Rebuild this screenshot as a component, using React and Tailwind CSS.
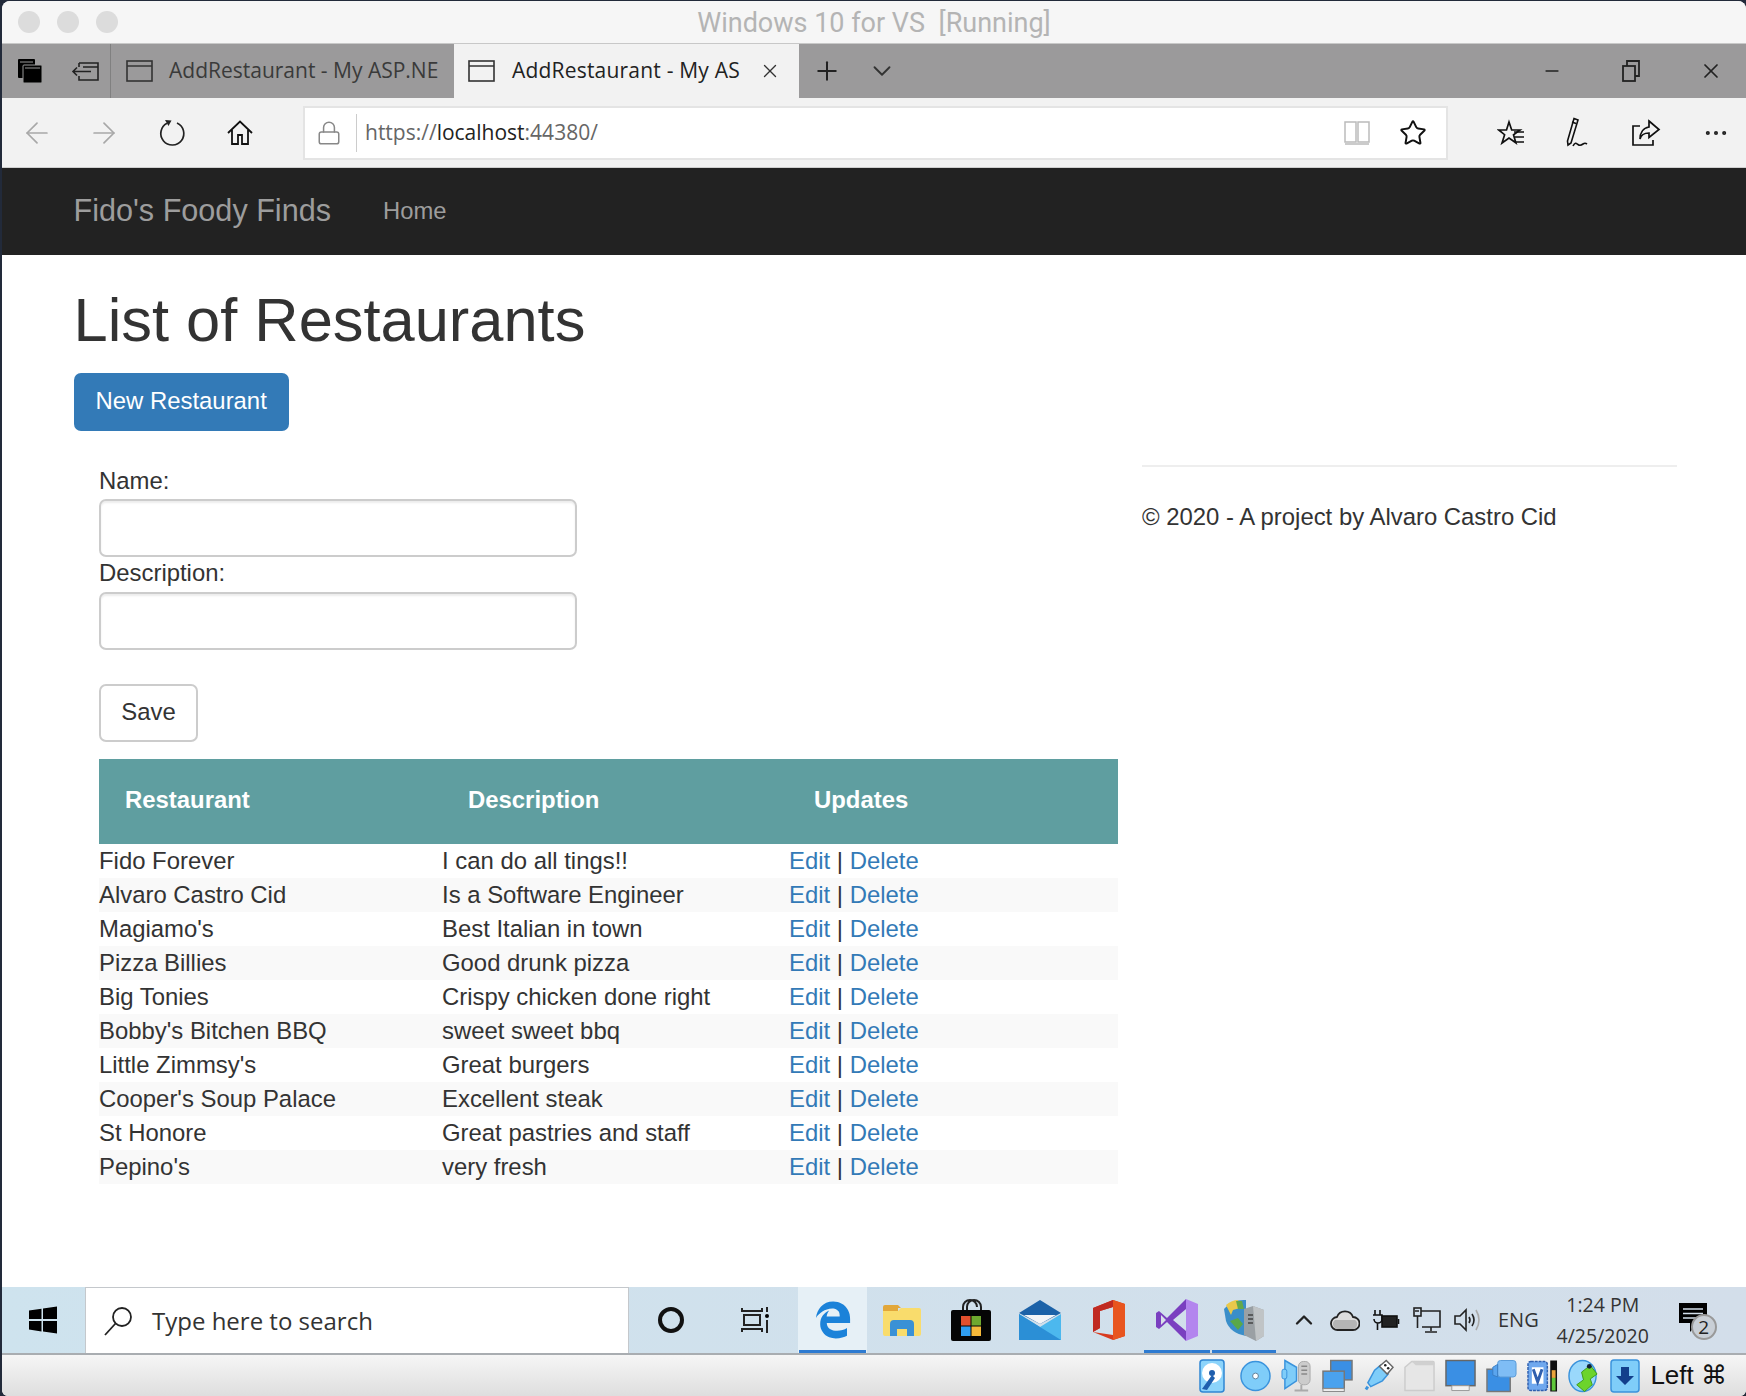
import { ArrowLeft, ArrowRight, Plus, ChevronDown, ChevronUp, Minus, X, Star, Lock, MoreHorizontal } from "lucide-react";
import { FaEdgeLegacy } from "react-icons/fa6";

const restaurants = [
  ["Fido Forever", "I can do all tings!!"],
  ["Alvaro Castro Cid", "Is a Software Engineer"],
  ["Magiamo's", "Best Italian in town"],
  ["Pizza Billies", "Good drunk pizza"],
  ["Big Tonies", "Crispy chicken done right"],
  ["Bobby's Bitchen BBQ", "sweet sweet bbq"],
  ["Little Zimmsy's", "Great burgers"],
  ["Cooper's Soup Palace", "Excellent steak"],
  ["St Honore", "Great pastries and staff"],
  ["Pepino's", "very fresh"],
];

function TabIcon() {
  return (
    <svg width="28" height="24" viewBox="0 0 28 24" fill="none" stroke="#333" strokeWidth="1.6" className="shrink-0">
      <rect x="1" y="2" width="25" height="20" />
      <path d="M1 7h25" />
    </svg>
  );
}

function TabsIcon() {
  return (
    <svg width="26" height="26" viewBox="0 0 26 26">
      <rect x="1" y="1" width="17" height="19" rx="1" fill="#000" />
      <path d="M3 4h13" stroke="#999" strokeWidth="1" />
      <rect x="6" y="7" width="19" height="18" rx="1" fill="#000" stroke="#999" strokeWidth="1" />
      <path d="M8 10h15" stroke="#999" strokeWidth="1" />
    </svg>
  );
}

function SetAsideIcon() {
  return (
    <svg width="28" height="20" viewBox="0 0 28 20" fill="none" stroke="#222" strokeWidth="1.6">
      <path d="M8 2h19v17H8v-4M8 6v-4M12 6h15" />
      <path d="M20 10.500H2M6 6.500l-4 4 4 4" />
    </svg>
  );
}

function ReloadIcon() {
  return (
    <svg width="28" height="28" viewBox="0 0 28 28" fill="none" stroke="#222" strokeWidth="1.7">
      <path d="M18 4a11.500 11.500 0 1 1-10 .3" />
      <path d="M6 1l6.500 .5-3 5.500z" fill="#222" strokeWidth="0" />
    </svg>
  );
}

function HomeIcon() {
  return (
    <svg width="28" height="28" viewBox="0 0 28 28" fill="none" stroke="#111" strokeWidth="1.8">
      <path d="M2 14 14 2.500 26 14M6 11v14h6v-9h4v9h6V11" />
    </svg>
  );
}

function BookIcon() {
  return (
    <svg width="26" height="24" viewBox="0 0 26 24" fill="none" stroke="#bbb" strokeWidth="1.5">
      <path d="M1 1h11v20H1zM14 1h11v20H14zM1 23h24" />
    </svg>
  );
}

function FavListIcon() {
  return (
    <svg width="28" height="28" viewBox="0 0 28 28" fill="none" stroke="#111" strokeWidth="1.7">
      <path d="M11 2l2.700 8H22l-6.500 4.800 2.400 8L11 18l-7 5 2.600-8.300L0.800 10H8.500z" transform="translate(1 1)" />
      <path d="M17 13h10M18 18h9M18 23h9" />
    </svg>
  );
}

function PenIcon() {
  return (
    <svg width="28" height="32" viewBox="0 0 28 32" fill="none" stroke="#111" strokeWidth="1.6">
      <path d="M10 1.500 14 3 7 26l-3 2-.5-4z" />
      <path d="M8 5l4 1.500" />
      <path d="M9 29c2-4 3-3 5-1.500s3 1 5-.5 4 0 4 0" />
    </svg>
  );
}

function ShareIcon() {
  return (
    <svg width="30" height="28" viewBox="0 0 30 28" fill="none" stroke="#111" strokeWidth="1.7">
      <path d="M9 7H2v19h20v-5" />
      <path d="M18 2l10 8.500-10 8V14c-5 0-8 2-9 6 0-6 3-11 9-12z" />
    </svg>
  );
}

function RestoreIcon() {
  return (
    <svg width="18" height="22" viewBox="0 0 18 22" fill="none" stroke="#222" strokeWidth="1.8">
      <rect x="1" y="6" width="12" height="15" />
      <path d="M5 6V1h12v15h-4" />
    </svg>
  );
}

function WindowsLogo() {
  return (
    <svg width="28" height="28" viewBox="0 0 28 28" fill="#000">
      <path d="M0 4.500 12.500 2.800V13H0zM14 2.500 28 .5V13H14zM0 15h12.500v10.400L0 23.500zM14 15h14v12.500l-14-2z" />
    </svg>
  );
}

function SearchGlassIcon() {
  return (
    <svg width="32" height="32" viewBox="0 0 32 32" fill="none" stroke="#222" strokeWidth="1.8">
      <circle cx="20" cy="12" r="9" />
      <path d="M13.500 18.500 3 30" />
    </svg>
  );
}

function TaskViewIcon() {
  return (
    <svg width="30" height="28" viewBox="0 0 30 28" fill="none" stroke="#222" strokeWidth="2">
      <path d="M1 2v3h20V2M3 9h16v10H3zM1 26v-3h20v3M26 1v5M26 14v13" />
      <circle cx="26" cy="10" r="2" fill="#000" stroke="none" />
    </svg>
  );
}

function FolderIcon() {
  return (
    <svg width="38" height="32" viewBox="0 0 38 32">
      <path d="M0 3q0-2 2-2h13l3 3h-3v3H0z" fill="#e2a73a" />
      <path d="M0 7h15l3-3h18q2 0 2 2v24q0 2-2 2H2q-2 0-2-2z" fill="#f9dc6c" />
      <path d="M7 32V20q0-4 4-4h16q4 0 4 4v12h-7v-7H14v7z" fill="#3a91d6" />
    </svg>
  );
}

function StoreIcon() {
  return (
    <svg width="40" height="42" viewBox="0 0 40 42">
      <path d="M12 14V8a7 7 0 0 1 14 0M16 14V8a7 7 0 0 1 14 0v6" fill="none" stroke="#222" strokeWidth="2" />
      <rect x="0" y="11" width="40" height="31" rx="2" fill="#050505" />
      <rect x="10" y="17" width="9.500" height="9.500" fill="#e2502d" />
      <rect x="20.500" y="17" width="9.500" height="9.500" fill="#6ea82f" />
      <rect x="10" y="27.500" width="9.500" height="9.500" fill="#2f9df0" />
      <rect x="20.500" y="27.500" width="9.500" height="9.500" fill="#f5b93a" />
    </svg>
  );
}

function MailIcon() {
  return (
    <svg width="42" height="40" viewBox="0 0 42 40">
      <path d="M0 13 21 0l21 13L21 24z" fill="#1c62a8" />
      <path d="M5 15h32L21 24z" fill="#f4f6f8" />
      <path d="M0 14 21 27 42 14v26H0z" fill="#4cb8ee" />
      <path d="M0 14 21 27 42 40H0z" fill="#2b8fd6" />
    </svg>
  );
}

function OfficeIcon() {
  return (
    <svg width="32" height="40" viewBox="0 0 32 40">
      <path d="M0 8 20 0l12 4v32l-12 4L0 32l20 3V7L7 11v17l-7 4z" fill="#d83b1f" />
      <path d="M20 0l12 4v32l-12 4 0-5V7z" fill="#e8551f" />
      <path d="M0 8 20 0v7L7 11v17l-7 4z" fill="#c02a22" />
    </svg>
  );
}

function VsIcon() {
  return (
    <svg width="42" height="42" viewBox="0 0 42 42">
      <path d="M30 0l12 5v32l-12 5z" fill="#b385ee" />
      <path d="M30 0 11 19 3 12l-3 2v14l3 2 8-7 19 19 0-10L17 21 30 10z" fill="#7a3fc0" />
      <path d="M5 16l5 5-5 5z" fill="#d7dfe9" />
    </svg>
  );
}

function VBoxManagerIcon() {
  return (
    <svg width="40" height="42" viewBox="0 0 40 42">
      <path d="M0 10q8-10 22-9v36Q6 34 2 22z" fill="#3a8ec9" />
      <path d="M2 6q6-5 12-5l2 8-7 2-2 5z" fill="#e9c84a" />
      <path d="M6 22l8-3 5 6-5 6z" fill="#5aa848" />
      <path d="M12 2l6 0 2 8-6 0z" fill="#64a84a" />
      <path d="M20 10l9-3 11 4v26l-8 5-12-6z" fill="#9aa0a4" />
      <path d="M29 7l11 4v26l-8 5z" fill="#c0c4c6" />
      <path d="M24 16h5M24 20h5M24 24h5" stroke="#444" strokeWidth="1.500" />
    </svg>
  );
}

function CloudIcon() {
  return (
    <svg width="30" height="24" viewBox="0 0 30 24">
      <path d="M8 22a6.500 6.500 0 0 1-1-13 8.500 8.500 0 0 1 16 0 6.500 6.500 0 0 1 0 13z" fill="#ddd" stroke="#222" strokeWidth="1.8" />
      <path d="M5 12h20a5 5 0 0 1-2 9H8a5 5 0 0 1-3-9z" fill="#b5b5b5" />
    </svg>
  );
}

function BatteryIcon() {
  return (
    <svg width="28" height="22" viewBox="0 0 28 22" fill="none" stroke="#111" strokeWidth="1.6">
      <path d="M3 1v5M8 1v5M1 6h9v4a4 4 0 0 1-8 0M5.500 14v7" />
      <rect x="10" y="7" width="15" height="11" fill="#222" />
      <path d="M26.500 10v5" />
    </svg>
  );
}

function NetworkIcon() {
  return (
    <svg width="28" height="26" viewBox="0 0 28 26" fill="none" stroke="#222" strokeWidth="1.6">
      <path d="M7 4h20v16H9M18 20v4M12 25h12" />
      <rect x="1" y="1" width="7" height="8" fill="#d2deea" />
      <path d="M4.500 9v12M2 4h4" />
    </svg>
  );
}

function VolumeIcon() {
  return (
    <svg width="28" height="26" viewBox="0 0 28 26" fill="none" stroke="#222" strokeWidth="1.6">
      <path d="M2 9h5l6-6v20l-6-6H2z" />
      <path d="M16 10q2 3 0 6M19 7q4 6 0 12" />
      <path d="M23 3q6 10 0 20" stroke="#aaa" />
    </svg>
  );
}

function NotificationIcon() {
  return (
    <div className="relative w-[34px] h-[34px]">
      <svg width="28" height="30" viewBox="0 0 28 30">
        <path d="M0 0h28v20h-9l-8 9v-9H0z" fill="#000" />
        <path d="M4 6h20M4 10.500h20M4 15h14" stroke="#d2deea" strokeWidth="1.500" />
      </svg>
      <div className="absolute left-[12px] top-[11px] w-[26px] h-[26px] rounded-full bg-[#c9cfd6] border-2 border-[#999] text-[19px] leading-[22px] text-center text-[#222] font-['Open_Sans',sans-serif]">
        2
      </div>
    </div>
  );
}

function HdIcon() {
  return (
    <svg width="26" height="34" viewBox="0 0 26 34">
      <rect x="1" y="1" width="24" height="32" rx="3" fill="#8cd4fb" stroke="#2f86d3" strokeWidth="1.500" />
      <circle cx="13" cy="14" r="10" fill="#fff" />
      <circle cx="13" cy="14" r="3" fill="#1f5fae" />
      <path d="M3 30 13 16l3 3L8 31z" fill="#1f5fae" />
    </svg>
  );
}

function CdIcon() {
  return (
    <svg width="32" height="32" viewBox="0 0 32 32">
      <circle cx="16" cy="16" r="15" fill="#7fcdf9" stroke="#3a93dc" strokeWidth="1.500" />
      <circle cx="16" cy="16" r="3" fill="#fff" stroke="#5a7e9a" strokeWidth="1" />
    </svg>
  );
}

function AudioIcon() {
  return (
    <svg width="32" height="34" viewBox="0 0 32 34">
      <rect x="18" y="2" width="12" height="24" rx="5" fill="#ccc" stroke="#aaa" />
      <path d="M21 7h6M21 11h6M21 15h6" stroke="#888" strokeWidth="1.500" />
      <path d="M14 32h14M21 26v6" stroke="#aaa" strokeWidth="2" />
      <path d="M4 1l12 7v14L4 30z" fill="#7fcdf9" stroke="#3a93dc" strokeWidth="1.500" />
      <rect x="1" y="10" width="5" height="10" rx="2" fill="#7fcdf9" stroke="#3a93dc" />
    </svg>
  );
}

function NetIcon() {
  return (
    <svg width="32" height="34" viewBox="0 0 32 34">
      <rect x="9" y="1" width="22" height="20" fill="#3a8fe4" stroke="#777" strokeWidth="1.500" />
      <rect x="1" y="12" width="22" height="18" fill="#4aa2ee" stroke="#777" strokeWidth="1.500" />
      <rect x="1" y="30" width="22" height="3" fill="#eee" stroke="#888" strokeWidth="1" />
    </svg>
  );
}

function UsbIcon() {
  return (
    <svg width="32" height="34" viewBox="0 0 32 34">
      <path d="M18 6 12 11 5 24l3 4 12-6 6-7z" fill="#7fcdf9" stroke="#3a93dc" strokeWidth="1.500" />
      <path d="M5 28l-2 3" stroke="#3a93dc" strokeWidth="3" />
      <path d="M17 7l7-6 7 7-6 7z" fill="#fff" stroke="#666" strokeWidth="1.500" />
      <circle cx="23" cy="6" r="1.300" fill="#222" />
      <circle cx="26" cy="9" r="1.300" fill="#222" />
    </svg>
  );
}

function SharedFolderIcon() {
  return (
    <svg width="32" height="32" viewBox="0 0 32 32">
      <path d="M1 7l7-6h22q1 0 1 1v29H1z" fill="#e6e6e6" stroke="#ccc" strokeWidth="1.500" />
      <path d="M8 1h22q1 0 1 1v3H12z" fill="#d0d0d0" />
    </svg>
  );
}

function DisplayIcon() {
  return (
    <svg width="32" height="34" viewBox="0 0 32 34">
      <rect x="1" y="1" width="30" height="26" fill="#3a8fe4" stroke="#666" strokeWidth="1.500" />
      <path d="M7 27h18v5H7z" fill="#f2f2f2" stroke="#999" />
    </svg>
  );
}

function CaptureIcon() {
  return (
    <svg width="32" height="34" viewBox="0 0 32 34">
      <rect x="1" y="10" width="24" height="23" fill="#3a8fe4" stroke="#777" strokeWidth="1.500" />
      <rect x="12" y="1" width="19" height="17" rx="3" fill="#7fbdf5" stroke="#5a9bd8" />
      <path d="M12 5l-5 3v8l5 2z" fill="#5aa5ee" stroke="#3a7ec4" />
    </svg>
  );
}

function VIcon() {
  return (
    <svg width="32" height="34" viewBox="0 0 32 34">
      <rect x="1" y="2" width="20" height="30" rx="3" fill="#6fa8ee" stroke="#2f5fae" strokeWidth="1.500" strokeDasharray="3 1" />
      <rect x="5" y="8" width="12" height="17" fill="#fff" />
      <path d="M6.500 10 11 23 15.500 10" fill="none" stroke="#2f5fae" strokeWidth="3" />
      <rect x="24" y="1" width="7" height="32" fill="#111" />
      <rect x="25.500" y="11" width="4" height="8" fill="#e8a33a" />
      <rect x="25.500" y="19" width="4" height="13" fill="#5fc83a" />
    </svg>
  );
}

function MouseIcon() {
  return (
    <svg width="32" height="34" viewBox="0 0 32 34">
      <ellipse cx="15" cy="17" rx="14" ry="16" fill="#9ad8fb" stroke="#3a93dc" strokeWidth="1.500" />
      <path d="M14 13 23 6l7 9-7 5 2 6-8 7-8-7 7-5z" fill="#6cd42c" stroke="#3f9a1a" />
      <circle cx="22" cy="7" r="2.500" fill="#123" />
    </svg>
  );
}

function DownIcon() {
  return (
    <svg width="30" height="34" viewBox="0 0 30 34">
      <rect x="1" y="1" width="28" height="32" rx="3" fill="#7fcdf9" stroke="#3a93dc" strokeWidth="1.500" />
      <path d="M11 8h8v9h5l-9 9-9-9h5z" fill="#123f8c" />
    </svg>
  );
}

function Tile({ children, active, underline, className = "w-[69px]" }) {
  return (
    <div className={`relative flex h-full items-center justify-center ${className} ${active ? "bg-[#e6f0f6]" : ""}`}>
      {children}
      {underline && <div className="absolute bottom-0 left-[1px] right-[1px] h-[3px] bg-[#2e7bd1]" />}
    </div>
  );
}

function StatusSlot({ children }) {
  return <div className="flex w-[31px] shrink-0 justify-center">{children}</div>;
}

export default function App() {
  const chrome = "font-['Open_Sans','Noto_Sans',sans-serif]";
  const bsFont = "font-['Liberation_Sans',Arial,sans-serif]";

  return (
    <div className="h-[1396px] w-[1746px] overflow-hidden bg-[#222a3a] pl-[2px] pt-[1px]">
      <div className="flex h-full flex-col overflow-hidden rounded-t-[8px] rounded-b-[6px] bg-white">
        {/* mac title bar */}
        <div className="relative flex h-[43px] shrink-0 items-center justify-center border-b border-[#c8c8c8] bg-[#f6f6f6] pt-[2px]">
          <div className="absolute left-[16px] top-[10px] flex gap-[17px]">
            <div className="h-[22px] w-[22px] rounded-full bg-[#dcdcdc]" />
            <div className="h-[22px] w-[22px] rounded-full bg-[#dcdcdc]" />
            <div className="h-[22px] w-[22px] rounded-full bg-[#dcdcdc]" />
          </div>
          <span className="whitespace-pre font-['Roboto',sans-serif] text-[27px] text-[#b4b4b4]">Windows 10 for VS  [Running]</span>
        </div>

        {/* edge tabs */}
        <div className={`flex h-[54px] shrink-0 items-center bg-[#9b9a9b] ${chrome} text-[21px] text-[#3a3a3a]`}>
          <div className="flex h-full w-[109px] items-center border-r border-[#808080] pl-[15px]">
            <TabsIcon />
            <div className="ml-[28px]"><SetAsideIcon /></div>
          </div>
          <div className="flex h-full w-[343px] items-center pl-[15px]">
            <TabIcon />
            <span className="ml-[15px] whitespace-nowrap">AddRestaurant - My ASP.NE</span>
          </div>
          <div className="flex h-full w-[345px] items-center bg-[#f2f2f2] pl-[14px] text-[#222]">
            <TabIcon />
            <span className="ml-[16px] w-[229px] whitespace-nowrap tracking-[0.2px]">AddRestaurant - My AS</span>
            <X size={22} strokeWidth={1.5} className="ml-[18px] text-[#333]" />
          </div>
          <Plus size={30} strokeWidth={1.6} className="ml-[13px] text-[#222]" />
          <ChevronDown size={30} strokeWidth={1.5} className="ml-[25px] text-[#333]" />
          <Minus size={20} strokeWidth={2} className="ml-[645px] text-[#222]" />
          <div className="ml-[60px]"><RestoreIcon /></div>
          <X size={24} strokeWidth={1.7} className="ml-[59px] text-[#222]" />
        </div>

        {/* edge toolbar */}
        <div className="flex h-[70px] shrink-0 items-center border-b border-[#cfcfcf] bg-[#f2f2f2]">
          <div className="flex w-[301px] items-center">
            <ArrowLeft size={34} strokeWidth={1.2} className="ml-[18px] text-[#a8a8a8]" />
            <ArrowRight size={34} strokeWidth={1.2} className="ml-[33px] text-[#a8a8a8]" />
            <div className="ml-[38px]"><ReloadIcon /></div>
            <div className="ml-[39px]"><HomeIcon /></div>
          </div>
          <div className="flex h-[54px] w-[1145px] items-center border-2 border-[#e4e4e4] bg-white">
            <Lock size={26} strokeWidth={1.4} className="ml-[11px] text-[#888]" />
            <div className="ml-[14px] h-[38px] w-px bg-[#ccc]" />
            <span className={`ml-[8px] pt-[1px] ${chrome} text-[21px] text-[#666]`}>
              https://<span className="text-[#222]">localhost</span>:44380/
            </span>
            <div className="ml-auto"><BookIcon /></div>
            <Star size={28} strokeWidth={1.7} className="ml-[29px] mr-[19px] text-[#111]" />
          </div>
          <div className="ml-[49px]"><FavListIcon /></div>
          <div className="ml-[39px]"><PenIcon /></div>
          <div className="ml-[39px]"><ShareIcon /></div>
          <MoreHorizontal size={28} strokeWidth={1.5} className="ml-[41px] text-[#222]" />
        </div>

        {/* site navbar */}
        <div className={`flex h-[87px] shrink-0 items-center bg-[#222] pb-[2px] pl-[71.500px] ${bsFont} text-[#9d9d9d]`}>
          <span className="text-[30.6px]">Fido's Foody Finds</span>
          <span className="ml-[52px] text-[23.8px]">Home</span>
        </div>

        {/* page */}
        <div className={`min-h-0 flex-1 pl-[71.500px] text-[23.9px] leading-[34px] text-[#333] ${bsFont}`}>
          <h1 className="pt-[32px] text-[61.400px] leading-[66px] font-normal">List of Restaurants</h1>
          <button className="mt-[20px] block h-[58px] rounded-[7px] bg-[#337ab7] px-[22px] pb-[2px] text-white">New Restaurant</button>
          <div className="flex">
            <div className="ml-[25.500px] w-[1019px]">
              <div className="pt-[33px]">Name:</div>
              <input className="mt-[1px] block h-[58px] w-[478px] rounded-[7px] border-2 border-[#ccc] bg-white shadow-[inset_0_2px_2px_rgba(0,0,0,0.075)]" />
              <div className="-mt-[1px]">Description:</div>
              <input className="mt-[2px] block h-[58px] w-[478px] rounded-[7px] border-2 border-[#ccc] bg-white shadow-[inset_0_2px_2px_rgba(0,0,0,0.075)]" />
              <button className="mt-[34px] block h-[58px] w-[99px] rounded-[7px] border-2 border-[#ccc] bg-white pb-[3px] text-[#333]">Save</button>
              <table className="mt-[17px] w-[1019px] table-fixed border-collapse">
                <thead>
                  <tr className="h-[85px] bg-[#5f9ea0] text-left text-white">
                    <th className="w-[343px] pb-[4px] pl-[26px] font-bold">Restaurant</th>
                    <th className="w-[347px] pb-[4px] pl-[26px] font-bold">Description</th>
                    <th className="pb-[4px] pl-[25px] font-bold">Updates</th>
                  </tr>
                </thead>
                <tbody>
                  {restaurants.map(([name, description], i) => (
                    <tr key={name} className={`h-[34px] leading-[33px] ${i % 2 === 1 ? "bg-[#f9f9f9]" : ""}`}>
                      <td className="p-0 pb-[1px]">{name}</td>
                      <td className="p-0 pb-[1px]">{description}</td>
                      <td className="p-0 pb-[1px]">
                        <span className="text-[#337ab7]">Edit</span> | <span className="text-[#337ab7]">Delete</span>
                      </td>
                    </tr>
                  ))}
                </tbody>
              </table>
            </div>
            <div className="ml-[24px] w-[535px] pt-[34px]">
              <hr className="border-t-2 border-[#eee]" />
              <p className="mt-[33px]">© 2020 - A project by Alvaro Castro Cid</p>
            </div>
          </div>
        </div>

        {/* windows taskbar */}
        <div className="flex h-[68px] shrink-0 items-center border-b-2 border-[#a9adb1] bg-gradient-to-r from-[#cee3ee] to-[#d3deea]">
          <div className="flex h-full w-[83px] items-center justify-center pr-[2px]"><WindowsLogo /></div>
          <div className={`flex h-full w-[544px] items-center border-x border-t border-[#c4c8cc] bg-white pl-[16px] ${chrome} text-[24px] text-[#333]`}>
            <SearchGlassIcon />
            <span className="ml-[18px]">Type here to search</span>
          </div>
          <Tile className="w-[84px]">
            <div className="h-[26px] w-[26px] rounded-full border-[4px] border-[#111]" />
          </Tile>
          <Tile className="w-[85px]"><TaskViewIcon /></Tile>
          <Tile active underline><FaEdgeLegacy size={38} color="#1b82d9" /></Tile>
          <Tile><FolderIcon /></Tile>
          <Tile><StoreIcon /></Tile>
          <Tile><MailIcon /></Tile>
          <Tile><OfficeIcon /></Tile>
          <Tile className="w-[68px]" underline><VsIcon /></Tile>
          <Tile className="w-[66px]" underline><VBoxManagerIcon /></Tile>
          <ChevronUp size={28} strokeWidth={2} className="ml-[13px] text-[#222]" />
          <div className="ml-[12px]"><CloudIcon /></div>
          <div className="ml-[12px]"><BatteryIcon /></div>
          <div className="ml-[13px]"><NetworkIcon /></div>
          <div className="ml-[12px]"><VolumeIcon /></div>
          <span className={`ml-[17px] ${chrome} text-[20px] text-[#333]`}>ENG</span>
          <div className={`ml-[14px] w-[100px] text-center ${chrome} text-[19.500px] leading-[31px] text-[#333]`}>
            <div>1:24 PM</div>
            <div>4/25/2020</div>
          </div>
          <div className="ml-[26px]"><NotificationIcon /></div>
        </div>

        {/* virtualbox status bar */}
        <div className="flex h-[41px] shrink-0 items-center justify-end gap-[10px] bg-gradient-to-b from-[#f6f6f6] to-[#dedede] pr-[19px]">
          <div className="mr-[3px]"><StatusSlot><HdIcon /></StatusSlot></div>
          <StatusSlot><CdIcon /></StatusSlot>
          <StatusSlot><AudioIcon /></StatusSlot>
          <StatusSlot><NetIcon /></StatusSlot>
          <StatusSlot><UsbIcon /></StatusSlot>
          <StatusSlot><SharedFolderIcon /></StatusSlot>
          <StatusSlot><DisplayIcon /></StatusSlot>
          <StatusSlot><CaptureIcon /></StatusSlot>
          <StatusSlot><VIcon /></StatusSlot>
          <StatusSlot><MouseIcon /></StatusSlot>
          <StatusSlot><DownIcon /></StatusSlot>
          <span className="whitespace-pre font-['Liberation_Sans','DejaVu_Sans',sans-serif] text-[26px] text-[#111]">Left ⌘</span>
        </div>
      </div>
    </div>
  );
}
